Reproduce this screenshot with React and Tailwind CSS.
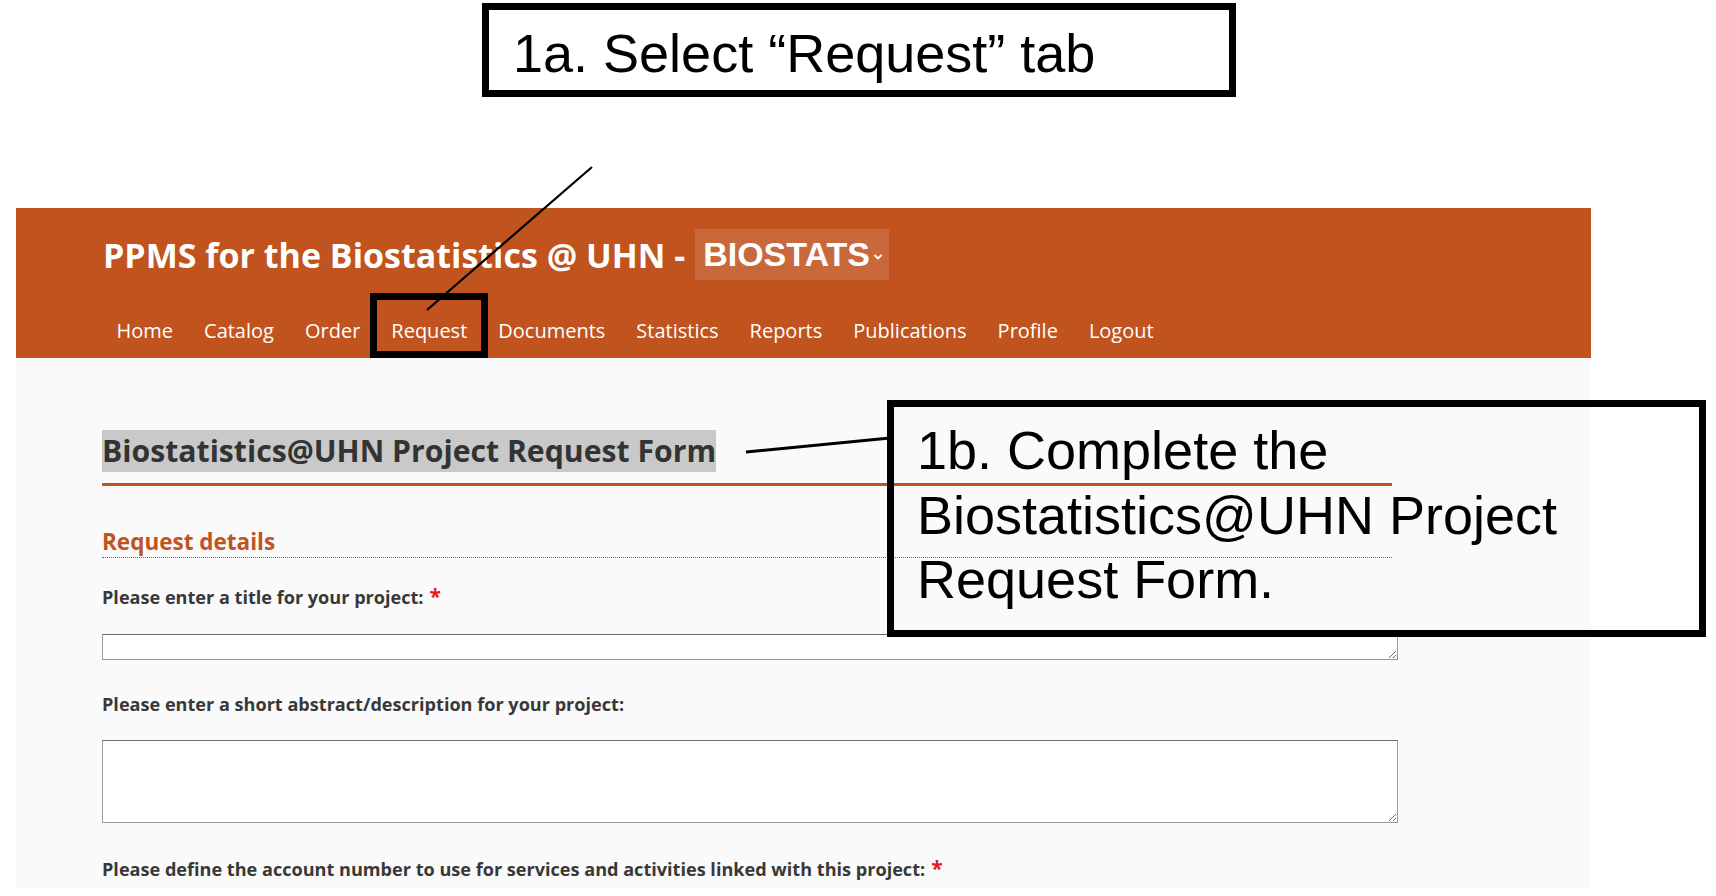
import React from "react";

// ===== Header navigation =====
const navItems = [
  "Home",
  "Catalog",
  "Order",
  "Request",
  "Documents",
  "Statistics",
  "Reports",
  "Publications",
  "Profile",
  "Logout",
];

const Header = () => (
  <div className="bg-[#c1531f] h-[150px] pt-[21px]">
    <div className="flex items-center h-[51px] pl-[87px]">
      <span className="text-white font-bold text-[34px] leading-none">
        PPMS for the Biostatistics @ UHN -
      </span>
      <span className="ml-[10px] h-[51px] flex items-center bg-[#c9693b] pl-[8px] pr-[5px] text-white font-bold text-[34px] font-['Liberation_Sans',Arial,sans-serif]">
        BIOSTATS
        <svg width="12" height="10" viewBox="0 0 12 10" className="ml-[2px] mt-[5px]">
          <path d="M2.5 3 L6 6.5 L9.5 3" stroke="white" strokeWidth="1.8" fill="none" />
        </svg>
      </span>
    </div>
    <nav className="flex pl-[85px] mt-[37px]">
      {navItems.map((item) => (
        <a key={item} className="px-[15.5px] text-white text-[20px] leading-[27px]">
          {item}
        </a>
      ))}
    </nav>
  </div>
);

// ===== Form field =====
const Field = ({ label, required, height, mt, boxMt }) => (
  <div className={mt}>
    <div className="text-[18.1px] leading-[24px] font-bold text-[#383838]">
      {label}
      {required && <span className="text-[#e0201c] ml-[6px] text-[21px] leading-none">*</span>}
    </div>
    {height && (
      <textarea
        className={`${boxMt} block w-[1296px] ${height} bg-white border border-[#9a9a9a] border-t-[#6b6b6b] outline-none`}
      />
    )}
  </div>
);

// ===== Main Component =====
export default function App() {
  return (
    <div className="relative w-[1716px] h-[896px] bg-white overflow-hidden font-['Open_Sans',sans-serif]">
      <div className="pt-[208px] pl-[16px]">
        <div className="w-[1575px]">
          <Header />
          <div className="bg-[#fafafa] h-[530px] pl-[86px] pt-[72px]">
            <h1 className="inline-block bg-[#c9c9c9] text-[#333333] font-bold text-[30.2px] leading-[42px]">
              Biostatistics@UHN Project Request Form
            </h1>
            <div className="w-[1290px] h-[3px] bg-[#c1531f] mt-[11px]"></div>
            <h2 className="mt-[41px] w-[1290px] text-[#c1531f] font-bold text-[22.5px] leading-[30px] border-b border-dotted border-[#c1531f]">
              Request details
            </h2>
            <Field mt="mt-[27px]" label="Please enter a title for your project:" required height="h-[26px]" boxMt="mt-[25px]" />
            <Field mt="mt-[32px]" label="Please enter a short abstract/description for your project:" height="h-[83px]" boxMt="mt-[24px]" />
            <Field mt="mt-[34px]" label="Please define the account number to use for services and activities linked with this project:" required />
          </div>
        </div>
      </div>

      {/* ===== Annotations ===== */}
      <svg className="absolute inset-0 pointer-events-none" width="1716" height="896">
        <line x1="592" y1="167" x2="427" y2="310" stroke="black" strokeWidth="2.2" />
        <line x1="746" y1="452" x2="890" y2="438" stroke="black" strokeWidth="3" />
      </svg>

      <div className="absolute left-[482px] top-[3px] w-[754px] h-[94px] border-[7px] border-black pl-[24px] pt-[11px] font-['Liberation_Sans',Arial,sans-serif] text-[54px] leading-[64px] text-black">
        1a. Select “Request” tab
      </div>

      <div className="absolute left-[370px] top-[293px] w-[118px] h-[65px] border-[7px] border-black"></div>

      <div className="absolute left-[887px] top-[400px] w-[819px] h-[237px] border-[7px] border-black pl-[23px] pt-[11px] font-['Liberation_Sans',Arial,sans-serif] text-[54px] leading-[64.5px] text-black">
        1b. Complete the
        <br />
        Biostatistics@UHN Project
        <br />
        Request Form.
      </div>
    </div>
  );
}
